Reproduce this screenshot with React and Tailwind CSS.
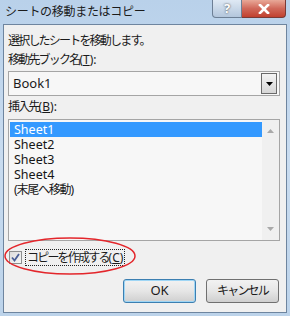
import React from 'react';

const sheets = ['Sheet1', 'Sheet2', 'Sheet3', 'Sheet4', '(末尾へ移動)'];

const App = () => {
  return (
    <div
      className="relative w-[290px] h-[316px] overflow-hidden bg-gradient-to-b from-[#b9d1ea] via-[#c9dcf0] to-[#bcd3ea] text-[12px] tracking-[-1.8px] text-[#1a1a1a]"
      style={{ fontFamily: "'Noto Sans', 'Noto Sans CJK JP', sans-serif" }}
    >
      {/* Title bar */}
      <div className="flex justify-between h-[24px]">
        <div className="pl-[5px] pt-[3px] text-[12px] tracking-[-0.3px] leading-[18px] text-[#1b1b1b] whitespace-nowrap">
          シートの移動またはコピー
        </div>
        <div className="flex mr-[4px]">
          <div className="w-[30px] h-[18px] flex items-center justify-center rounded-bl-[4px] border border-t-0 border-[#6d7f95] bg-gradient-to-b from-[#dfe9f4] to-[#b3c6dc] text-white font-bold text-[13px] tracking-normal leading-none [text-shadow:0_0_2px_#333]">
            ?
          </div>
          <div className="w-[44px] h-[18px] flex items-center justify-center rounded-br-[4px] border border-t-0 border-l-0 border-[#7a3a36] bg-gradient-to-b from-[#e8a898] via-[#d0685a] to-[#c1402f]">
            <svg width="12" height="10" viewBox="0 0 12 10">
              <path d="M2 1 L10 9 M10 1 L2 9" stroke="#fff" strokeWidth="2.6" strokeLinecap="square" />
            </svg>
          </div>
        </div>
      </div>

      {/* Client area */}
      <div className="mx-[3px] h-[289px] border border-[#6e859f] bg-[#f0f0f0] pl-[4px] pr-[6px] pt-[8px] flex flex-col">
        <div className="leading-[16px] whitespace-nowrap">選択したシートを移動します。</div>
        <div className="leading-[16px] mt-[3px] whitespace-nowrap">
          移動先ブック名<span className="tracking-normal">(<span className="underline">T</span>):</span>
        </div>

        <div className="mt-[3px] h-[25px] border border-[#a5a5a5] bg-[#f7f7f7] flex items-center justify-between pl-[4px] pr-[2px]">
          <span className="text-[13px] tracking-normal">Book1</span>
          <div className="w-[16px] h-[21px] border border-[#6a6a6a] bg-gradient-to-b from-[#f4f4f4] to-[#d6d6d6] flex items-center justify-center">
            <svg width="7" height="4" viewBox="0 0 7 4">
              <path d="M0 0 H7 L3.5 4 Z" fill="#000" />
            </svg>
          </div>
        </div>

        <div className="leading-[16px] mt-[3px] whitespace-nowrap">
          挿入先<span className="tracking-normal">(<span className="underline">B</span>):</span>
        </div>

        <div className="mt-[4px] h-[122px] border border-[#a5a5a5] bg-[#f7f7f7] flex">
          <div className="flex-1 pt-[2px] pl-[1px]">
            {sheets.map((s, i) => (
              <div
                key={s}
                className={`h-[15px] leading-[15px] pl-[4px] whitespace-nowrap ${
                  i === 4 ? 'text-[12px] tracking-[-1.2px]' : 'text-[12.5px] tracking-normal'
                } ${i === 0 ? 'bg-[#3399ff] text-white' : 'text-[#151515]'}`}
              >
                {s}
              </div>
            ))}
          </div>
          <div className="w-[17px] bg-[#f0f0f0] flex flex-col justify-between items-center py-[9px]">
            <svg width="7" height="4" viewBox="0 0 7 4">
              <path d="M3.5 0 L7 4 H0 Z" fill="#a9a9a9" />
            </svg>
            <svg width="7" height="4" viewBox="0 0 7 4">
              <path d="M0 0 H7 L3.5 4 Z" fill="#a9a9a9" />
            </svg>
          </div>
        </div>

        <div className="mt-[7px] h-[18px] flex items-center pl-[1px]">
          <div className="w-[13px] h-[13px] border border-[#8e8f8f] bg-gradient-to-br from-[#dcdcdc] to-[#f7f7f7] flex items-center justify-center">
            <svg width="9" height="9" viewBox="0 0 9 9">
              <path d="M1 4.5 L3.5 7.5 L8 1" stroke="#4a5f97" strokeWidth="1.8" fill="none" />
            </svg>
          </div>
          <div className="ml-[3px] pl-[1px] pr-[1px] border border-dotted border-[#222] leading-[15px] whitespace-nowrap">
            コピーを作成する<span className="tracking-normal">(<span className="underline">C</span>)</span>
          </div>
        </div>

        <div className="mt-[13px] flex justify-end gap-[10px] pr-[1px]">
          <button className="w-[73px] h-[24px] rounded-[3px] border border-[#3c7fb1] shadow-[inset_0_0_0_1px_#9fd6f5] bg-gradient-to-b from-[#f2f2f2] via-[#e6e6e6] to-[#cfcfcf] text-[13px] tracking-normal">
            OK
          </button>
          <button className="w-[73px] h-[24px] rounded-[3px] border border-[#707070] bg-gradient-to-b from-[#f2f2f2] via-[#e6e6e6] to-[#cfcfcf] text-[12px] whitespace-nowrap">
            キャンセル
          </button>
        </div>
      </div>

      {/* red annotation ellipse */}
      <svg className="absolute left-0 top-0 pointer-events-none" width="290" height="316">
        <ellipse cx="70" cy="256" rx="65" ry="18" fill="none" stroke="#e3262b" strokeWidth="1.5" />
      </svg>
    </div>
  );
};

export default App;
